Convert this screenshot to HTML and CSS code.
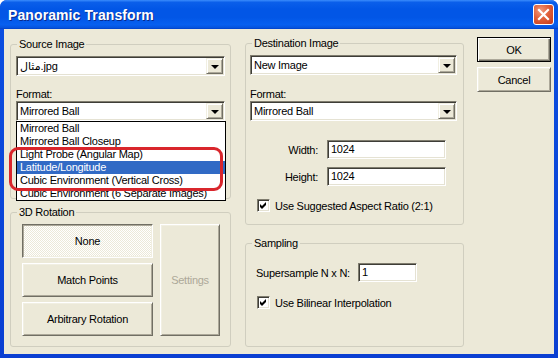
FILE: index.html
```html
<!DOCTYPE html>
<html>
<head>
<meta charset="utf-8">
<link rel="stylesheet" href="styles.css">
</head>
<body>
<div class="window">
  <div class="titlebar">
    <span class="title">Panoramic Transform</span>
    <span class="close"><svg width="13" height="13" viewBox="0 0 13 13"><path d="M2 2 L11 11 M11 2 L2 11" stroke="#fff" stroke-width="2.2" stroke-linecap="square"/></svg></span>
  </div>
  <div class="frame">
    <div class="client">
      <div class="col-left">
        <div class="group source">
          <div class="legend">Source Image</div>
          <div class="combo src-combo"><span class="combo-text">مثال.jpg</span><span class="drop"><span class="tri"></span></span></div>
          <div class="label fmt-label">Format:</div>
          <div class="combo-wrap">
            <div class="combo"><span class="combo-text">Mirrored Ball</span><span class="drop"><span class="tri"></span></span></div>
            <div class="listbox">
              <div class="item">Mirrored Ball</div>
              <div class="item">Mirrored Ball Closeup</div>
              <div class="item">Light Probe (Angular Map)</div>
              <div class="item sel">Latitude/Longitude</div>
              <div class="item">Cubic Environment (Vertical Cross)</div>
              <div class="item">Cubic Environment (6 Separate Images)</div>
              <div class="redmark"></div>
            </div>
          </div>
        </div>
        <div class="group rotation">
          <div class="legend">3D Rotation</div>
          <div class="rot-body">
            <div class="rot-stack">
              <div class="btn pressed">None</div>
              <div class="btn">Match Points</div>
              <div class="btn">Arbitrary Rotation</div>
            </div>
            <div class="btn settings disabled">Settings</div>
          </div>
        </div>
      </div>
      <div class="col-mid">
        <div class="group dest">
          <div class="legend">Destination Image</div>
          <div class="combo dst-combo"><span class="combo-text">New Image</span><span class="drop"><span class="tri"></span></span></div>
          <div class="label fmt-label">Format:</div>
          <div class="combo"><span class="combo-text">Mirrored Ball</span><span class="drop"><span class="tri"></span></span></div>
          <div class="field-row first">
            <span class="field-label">Width:</span>
            <span class="edit wide">1024</span>
          </div>
          <div class="field-row second">
            <span class="field-label">Height:</span>
            <span class="edit wide">1024</span>
          </div>
          <div class="check-row aspect">
            <span class="checkbox"><svg width="9" height="9" viewBox="0 0 9 9"><path d="M1 3 L3 5 L7 1 L7 4 L3 8 L1 6 Z" fill="#000"/></svg></span>
            <span>Use Suggested Aspect Ratio (2:1)</span>
          </div>
        </div>
        <div class="group sampling">
          <div class="legend">Sampling</div>
          <div class="super-row">
            <span class="super-label">Supersample N x N:</span>
            <span class="edit small">1</span>
          </div>
          <div class="check-row bilinear">
            <span class="checkbox"><svg width="9" height="9" viewBox="0 0 9 9"><path d="M1 3 L3 5 L7 1 L7 4 L3 8 L1 6 Z" fill="#000"/></svg></span>
            <span>Use Bilinear Interpolation</span>
          </div>
        </div>
      </div>
      <div class="col-right">
        <div class="btn default">OK</div>
        <div class="btn cancel">Cancel</div>
      </div>
    </div>
  </div>
</div>
</body>
</html>
```
FILE: styles.css
```css
* { box-sizing: border-box; }
html, body { margin: 0; padding: 0; }
body {
  width: 558px;
  height: 358px;
  overflow: hidden;
  background: #ffffff;
  font-family: "Liberation Sans", "DejaVu Sans", Arial, sans-serif;
  font-size: 11px;
  letter-spacing: -0.25px;
  color: #000;
}
.window {
  width: 558px;
  height: 358px;
  display: flex;
  flex-direction: column;
  border-radius: 7px 7px 0 0;
  overflow: hidden;
  background: #0842D8;
}
.titlebar {
  height: 29px;
  flex: none;
  display: flex;
  align-items: center;
  justify-content: space-between;
  padding: 0 4px 0 8px;
  background: linear-gradient(#3B8CFC 0%, #0B5FEA 8%, #0256E6 30%, #0256E6 60%, #0760F0 85%, #0654DE 95%, #0040C8 100%);
}
.title {
  color: #fff;
  font-weight: bold;
  font-size: 14px;
  letter-spacing: 0.1px;
  text-shadow: 1px 1px #0A2A8C;
  margin-top: 1px;
}
.close {
  width: 21px;
  height: 21px;
  border: 1px solid #fff;
  border-radius: 3px;
  background: radial-gradient(circle at 35% 30%, #F29A7C 0%, #E0603A 45%, #C4391A 100%);
  display: flex;
  align-items: center;
  justify-content: center;
}
.frame {
  flex: 1;
  padding: 0 4px 4px 4px;
  background: linear-gradient(to bottom, #0B4EE0, #0A3FD2);
  display: flex;
}
.client {
  flex: 1;
  background: #ECE9D8;
  display: flex;
  align-items: flex-start;
  padding: 0 3px 0 6px;
}
.col-left { width: 221px; flex: none; display: flex; flex-direction: column; }
.col-mid { width: 219px; flex: none; margin-left: 14px; display: flex; flex-direction: column; }
.col-right { width: 74px; flex: none; margin-left: 13px; display: flex; flex-direction: column; }

.group {
  border: 1px solid #D0CEBF;
  border-radius: 3px;
  display: flex;
  flex-direction: column;
  align-items: flex-start;
}
.legend {
  margin-top: -7px;
  padding: 0 2px;
  height: 13px;
  line-height: 13px;
  background: #ECE9D8;
  white-space: nowrap;
}
.source { margin-top: 15px; height: 155px; padding-left: 5px; }
.source .legend { margin-left: 1px; }
.rotation { margin-top: 13px; height: 135px; padding-left: 11px; }
.rotation .legend { margin-left: -5px; }
.dest { margin-top: 14px; height: 182px; padding-left: 4px; }
.dest .legend { margin-left: 2px; }
.sampling { margin-top: 18px; height: 104px; padding-left: 10px; }
.sampling .legend { margin-left: -4px; }

.label { height: 13px; line-height: 13px; }
.fmt-label { margin-top: 12px; }
.dest .fmt-label { margin-top: 13px; }

.combo {
  width: 209px;
  height: 20px;
  background: #fff;
  border-style: solid;
  border-width: 1px;
  border-color: #7F7C6E #FFFFFF #FFFFFF #7F7C6E;
  box-shadow: inset 1px 1px #3E3D37, inset -1px -1px #E5E2D3;
  display: flex;
  align-items: center;
  padding: 1px 1px 1px 3px;
}
.dest .combo { width: 207px; }
.src-combo, .dst-combo { margin-top: 5px; }
.combo-text { flex: 1; line-height: 13px; white-space: nowrap; }
.drop {
  width: 17px;
  height: 16px;
  background: #ECE9D8;
  border-style: solid;
  border-width: 1px;
  border-color: #F1EFE2 #716F64 #716F64 #F1EFE2;
  box-shadow: inset 1px 1px #fff, inset -1px -1px #ACA899;
  display: flex;
  align-items: center;
  justify-content: center;
}
.tri {
  width: 0;
  height: 0;
  border-left: 4px solid transparent;
  border-right: 4px solid transparent;
  border-top: 4px solid #000;
  margin-top: 1px;
}

.combo-wrap { position: relative; }
.listbox {
  position: absolute;
  top: 20px;
  left: 0;
  width: 210px;
  background: #fff;
  border: 1px solid #000;
  padding: 0;
  z-index: 5;
}
.item {
  height: 13px;
  line-height: 13px;
  padding-left: 3px;
  white-space: nowrap;
}
.item.sel { background: #316AC5; color: #fff; }
.redmark {
  position: absolute;
  left: -8px;
  top: 25px;
  width: 214px;
  height: 44px;
  border: 3px solid #D9262C;
  border-radius: 9px;
}

.rot-body {
  margin-top: 5px;
  display: flex;
  gap: 7px;
}
.rot-stack { width: 131px; display: flex; flex-direction: column; gap: 5px; }
.btn {
  height: 34px;
  background: #ECE9D8;
  border-style: solid;
  border-width: 1px;
  border-color: #FFFFFF #716F64 #716F64 #FFFFFF;
  box-shadow: inset 1px 1px #F1EFE2, inset -1px -1px #ACA899;
  display: flex;
  align-items: center;
  justify-content: center;
  white-space: nowrap;
}
.btn.pressed {
  border-color: #716F64 #FFFFFF #FFFFFF #716F64;
  box-shadow: inset 1px 1px #ACA899, inset -1px -1px #F1EFE2;
  background: repeating-conic-gradient(#FFFFFF 0 25%, #ECE9D8 0 50%) 0 0 / 2px 2px;
}
.settings { width: 60px; height: 112px; }
.disabled { color: #ACA899; }

.col-right .btn { height: 25px; }
.btn.default {
  margin-top: 8px;
  border: 1px solid #000;
  box-shadow: inset 1px 1px #fff, inset -1px -1px #716F64, inset -2px -2px #ACA899;
}
.btn.cancel { margin-top: 5px; }

.field-row { display: flex; align-items: center; }
.field-row.first { margin-top: 19px; }
.field-row.second { margin-top: 8px; }
.field-label { width: 68px; text-align: right; margin-right: 9px; }
.edit {
  height: 19px;
  background: #fff;
  border-style: solid;
  border-width: 1px;
  border-color: #7F7C6E #FFFFFF #FFFFFF #7F7C6E;
  box-shadow: inset 1px 1px #3E3D37, inset -1px -1px #E5E2D3;
  padding: 2px 0 0 3px;
  line-height: 13px;
}
.edit.wide { width: 119px; }
.edit.small { width: 59px; }

.check-row { display: flex; align-items: center; gap: 5px; padding-left: 7px; }
.check-row.aspect { margin-top: 13px; }
.check-row.bilinear { margin-top: 14px; padding-left: 1px; }
.checkbox {
  width: 13px;
  height: 13px;
  background: #fff;
  border-style: solid;
  border-width: 1px;
  border-color: #7F7C6E #FFFFFF #FFFFFF #7F7C6E;
  box-shadow: inset 1px 1px #3E3D37, inset -1px -1px #E5E2D3;
  display: flex;
  align-items: center;
  justify-content: center;
}
.checkbox svg { display: block; }

.super-row { display: flex; align-items: center; margin-top: 13px; }
.super-label { width: 102px; white-space: nowrap; }
```
